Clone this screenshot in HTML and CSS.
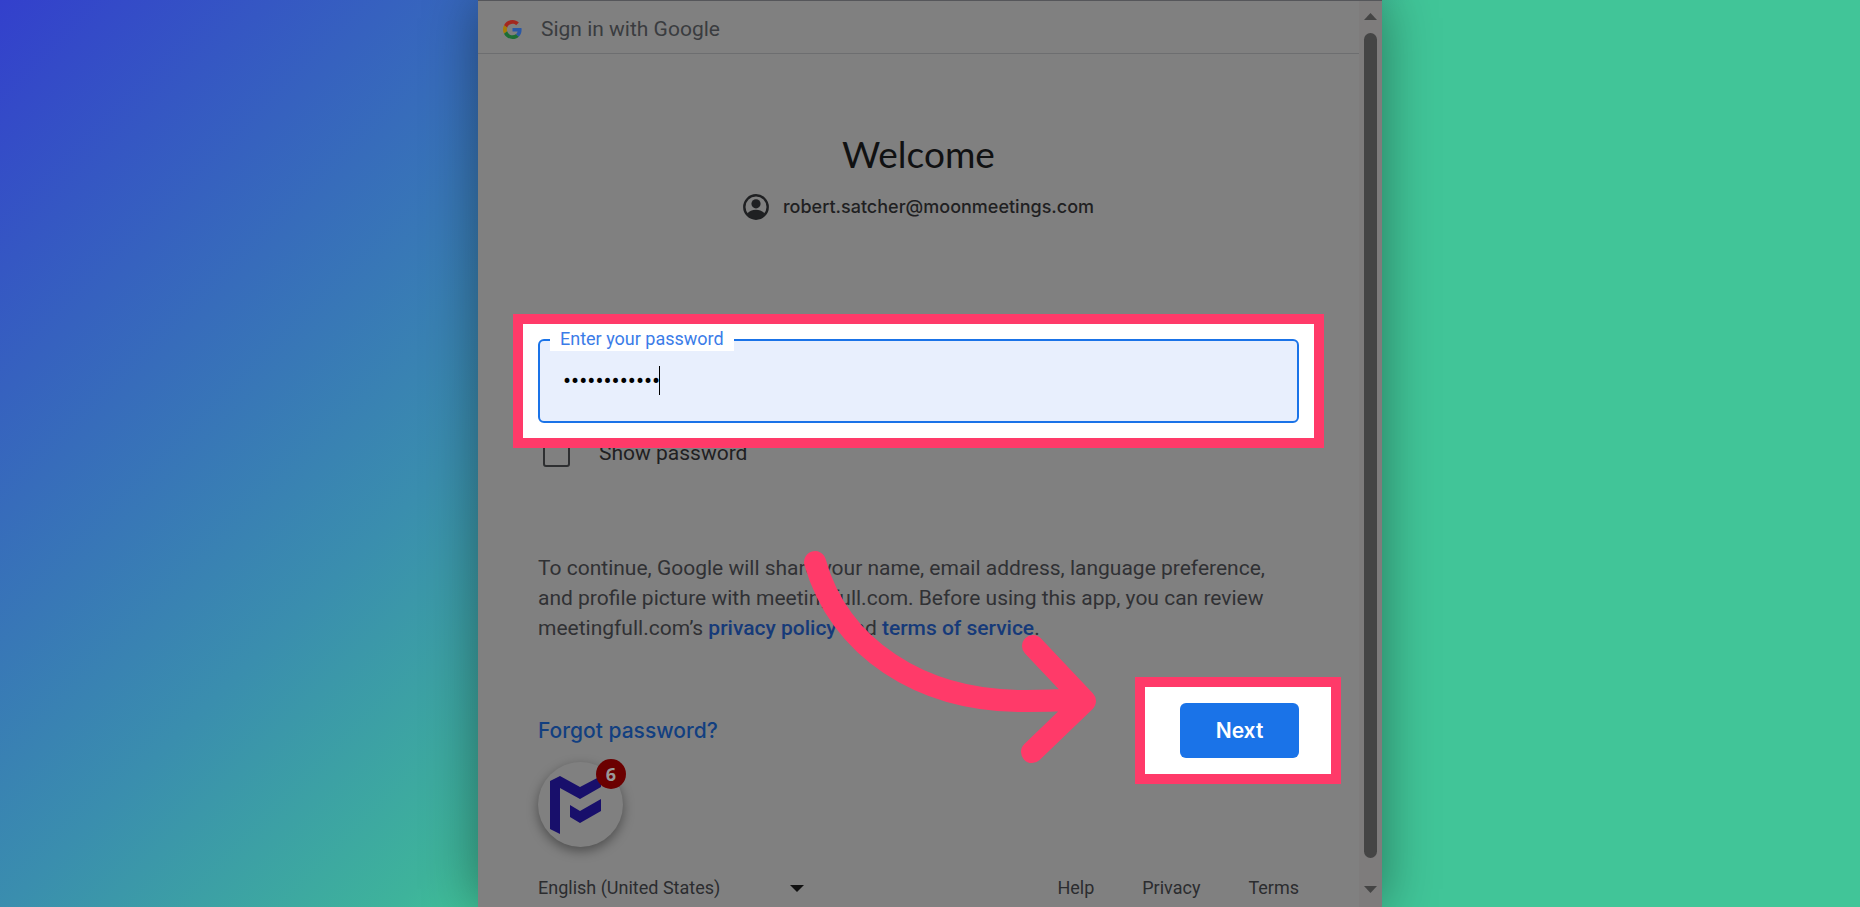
FILE: index.html
```html
<!DOCTYPE html>
<html lang="en">
<head>
<meta charset="utf-8">
<title>Sign in with Google</title>
<link rel="stylesheet" href="styles.css">
</head>
<body>
<main class="window">
  <div class="page">
    <header class="topbar">
      <svg class="google" viewBox="0 0 48 48" aria-hidden="true">
        <path fill="#a3281f" d="M24 9.5c3.54 0 6.71 1.22 9.21 3.6l6.85-6.85C35.9 2.38 30.47 0 24 0 14.62 0 6.51 5.38 2.56 13.22l7.98 6.19C12.43 13.72 17.74 9.5 24 9.5z"/>
        <path fill="#2a58a6" d="M46.98 24.55c0-1.57-.15-3.09-.38-4.55H24v9.02h12.94c-.58 2.96-2.26 5.48-4.78 7.18l7.73 6c4.51-4.18 7.09-10.36 7.09-17.65z"/>
        <path fill="#a67c05" d="M10.53 28.59c-.48-1.45-.76-2.99-.76-4.59s.27-3.14.76-4.59l-7.98-6.19C.92 16.46 0 20.12 0 24c0 3.88.92 7.54 2.56 10.78l7.97-6.19z"/>
        <path fill="#1d6e34" d="M24 48c6.48 0 11.93-2.13 15.89-5.81l-7.73-6c-2.15 1.45-4.92 2.3-8.16 2.3-6.26 0-11.57-4.22-13.47-9.91l-7.98 6.19C6.51 42.62 14.62 48 24 48z"/>
      </svg>
      <span>Sign in with Google</span>
    </header>
    <form class="content">
      <h1 class="title">Welcome</h1>
      <p class="account">
        <svg class="avatar" viewBox="0 0 26 26" aria-hidden="true">
          <circle cx="13" cy="13" r="11.7" fill="none" stroke="#1f2022" stroke-width="2.4"/>
          <circle cx="13" cy="9.8" r="4.6" fill="#1f2022"/>
          <path fill="#1f2022" d="M4 20c2-3 5.500-4.300 9-4.300s7 1.300 9 4.300c-2 3-5.500 5-9 5s-7-2-9-5z"/>
        </svg>
        <span>robert.satcher@moonmeetings.com</span>
      </p>
      <div class="highlight password-highlight">
        <div class="field">
          <label class="field-label" for="password">Enter your password</label>
          <input class="field-input" id="password" type="password" value="abcdefghijkl">
          <span class="caret"></span>
        </div>
      </div>
      <div class="show">
        <input class="show-box" id="show" type="checkbox">
        <label for="show">Show password</label>
      </div>
      <p class="terms">To continue, Google will share your name, email address, language preference, and profile picture with meetingfull.com. Before using this app, you can review meetingfull.com’s <a href="#">privacy policy</a> and <a href="#">terms of service</a>.</p>
      <div class="actions">
        <a class="forgot" href="#">Forgot password?</a>
        <div class="highlight next-highlight"><button class="next" type="button">Next</button></div>
      </div>
      <div class="launcher">
        <svg class="launcher-mark" viewBox="0 0 52 58" aria-hidden="true">
          <path fill="#180f6b" d="M0 5 10 0 30 11 51 0V11L30 23 10 12V58L0 53zM20 29 30 35 51 23V35L30 47 20 41z"/>
        </svg>
        <span class="badge">6</span>
      </div>
    </form>
    <footer class="footer">
      <select class="language" aria-label="Language"><option>English (United States)</option></select>
      <svg class="language-arrow" viewBox="0 0 14 7" aria-hidden="true"><path d="M0 0h14L7 7z" fill="#111"/></svg>
      <nav class="links"><a href="#">Help</a><a href="#">Privacy</a><a href="#">Terms</a></nav>
    </footer>
    <svg class="arrow" viewBox="0 0 320 230" aria-hidden="true">
      <path d="M25 22C49 107 130 162 236 161Q260 161 284 159.500M243 106 295 161 242 212" fill="none" stroke="#ff3a69" stroke-width="22" stroke-linecap="round" stroke-linejoin="round"/>
    </svg>
  </div>
  <div class="scrollbar" aria-hidden="true">
    <svg class="scroll-arrow" viewBox="0 0 13 7"><path d="M0 7 6.500 0 13 7z" fill="#454545"/></svg>
    <div class="thumb"></div>
    <svg class="scroll-arrow" viewBox="0 0 13 7"><path d="M0 0 6.500 7 13 0z" fill="#454545"/></svg>
  </div>
</main>
</body>
</html>
```
FILE: styles.css
```css
* { box-sizing: border-box; }
body {
  margin: 0;
  min-height: 100vh;
  display: flex;
  justify-content: center;
  overflow: hidden;
  background: linear-gradient(135deg, #3340cc 0%, #3a8eae 33%, #3eb39b 47%, #41c598 51%);
  font-family: Roboto, "Liberation Sans", sans-serif;
  font-size: 21px;
  color: #1f2022;
}
a { text-decoration: none; color: inherit; }
.window {
  display: flex;
  width: 100%;
  max-width: 904px;
  min-height: 100vh;
  background: #808080;
  border-top: 1px solid #55565a;
  box-shadow: 0 0 50px rgba(0, 0, 0, 0.4);
}
.page {
  position: relative;
  flex: 1;
  display: flex;
  flex-direction: column;
}
.topbar {
  display: flex;
  align-items: center;
  gap: 19px;
  height: 53px;
  padding: 4px 25px 0;
  border-bottom: 1px solid #6d6e70;
  color: #3a3c3f;
}
.google { width: 19px; height: 19px; }
.content { padding: 78px 60px 0; }
.title {
  margin: 0;
  font: 400 37px/44px Lato, Roboto, sans-serif;
  text-align: center;
  color: #101112;
}
.account {
  display: flex;
  justify-content: center;
  align-items: center;
  gap: 14px;
  margin: 18px 0 0;
  font: 500 18px/26px Inter, Roboto, sans-serif;
  color: #1f2022;
}
.avatar { width: 26px; height: 26px; }
.highlight { border: 10px solid #ff3a69; background: #fff; }
.password-highlight {
  position: relative;
  margin: 94px -25px 0;
  padding: 15px;
}
.field { position: relative; height: 84px; }
.field-label {
  position: absolute;
  top: -12px;
  left: 12px;
  padding: 0 10px;
  background: #fff;
  font-size: 18px;
  line-height: 24px;
  color: #3b7ce8;
}
.field-input {
  width: 100%;
  height: 100%;
  padding: 0 23px;
  border: 2px solid #1a73e8;
  border-radius: 6px;
  background: #e8effd;
  font: 24px/28px Roboto, sans-serif;
  color: #000;
  outline: none;
}
.caret {
  position: absolute;
  top: 27px;
  left: 121px;
  width: 1px;
  height: 29px;
  background: #000;
}
.show {
  display: flex;
  align-items: center;
  gap: 29px;
  margin-top: -10px;
  padding-left: 5px;
  line-height: 30px;
}
.show-box {
  appearance: none;
  width: 27px;
  height: 27px;
  margin: 0;
  border: 2px solid #2e2f31;
  border-radius: 3px;
}
.terms {
  margin: 85px 0 0;
  line-height: 30px;
  color: #303134;
}
.terms a { font-weight: 500; color: #163a79; }
.actions {
  display: flex;
  justify-content: space-between;
  align-items: center;
  margin: 34px -42px 0 0;
}
.forgot {
  font: 500 21px/28px Inter, Roboto, sans-serif;
  color: #123f80;
}
.next-highlight { padding: 16px 32px 16px 35px; }
.next {
  display: block;
  width: 119px;
  height: 55px;
  border: 0;
  border-radius: 6px;
  background: #1a73e8;
  font: 600 21px/28px Inter, Roboto, sans-serif;
  color: #fff;
}
.launcher {
  position: relative;
  display: flex;
  align-items: center;
  width: 85px;
  height: 85px;
  margin-top: -22px;
  padding-left: 12px;
  border-radius: 50%;
  background: #808080;
  box-shadow: 0 4px 12px rgba(0, 0, 0, 0.4);
}
.launcher-mark { width: 52px; height: 58px; }
.badge {
  position: absolute;
  top: -3px;
  right: -3px;
  width: 30px;
  height: 30px;
  border-radius: 50%;
  background: #6b0000;
  font: 700 18px/30px "Noto Sans", sans-serif;
  text-align: center;
  color: #999;
}
.footer {
  display: flex;
  align-items: center;
  margin-top: 28px;
  padding: 0 60px;
  font-size: 18px;
  line-height: 26px;
}
.language {
  appearance: none;
  width: 252px;
  padding: 0;
  border: 0;
  background: none;
  font: 18px/26px Roboto, sans-serif;
  color: #2b2c2f;
}
.language-arrow { width: 14px; height: 7px; }
.links { display: flex; gap: 48px; margin-left: auto; color: #2b2c2f; }
.arrow {
  position: absolute;
  top: 539px;
  left: 312px;
  width: 320px;
  height: 230px;
  pointer-events: none;
}
.scrollbar {
  display: flex;
  flex-direction: column;
  align-items: center;
  gap: 13px;
  width: 23px;
  padding: 12px 0 14px;
  background: #7e7c7c;
}
.scroll-arrow { width: 13px; height: 7px; }
.thumb { flex: 1; width: 13px; margin-bottom: 15px; border-radius: 7px; background: #454545; }
```
